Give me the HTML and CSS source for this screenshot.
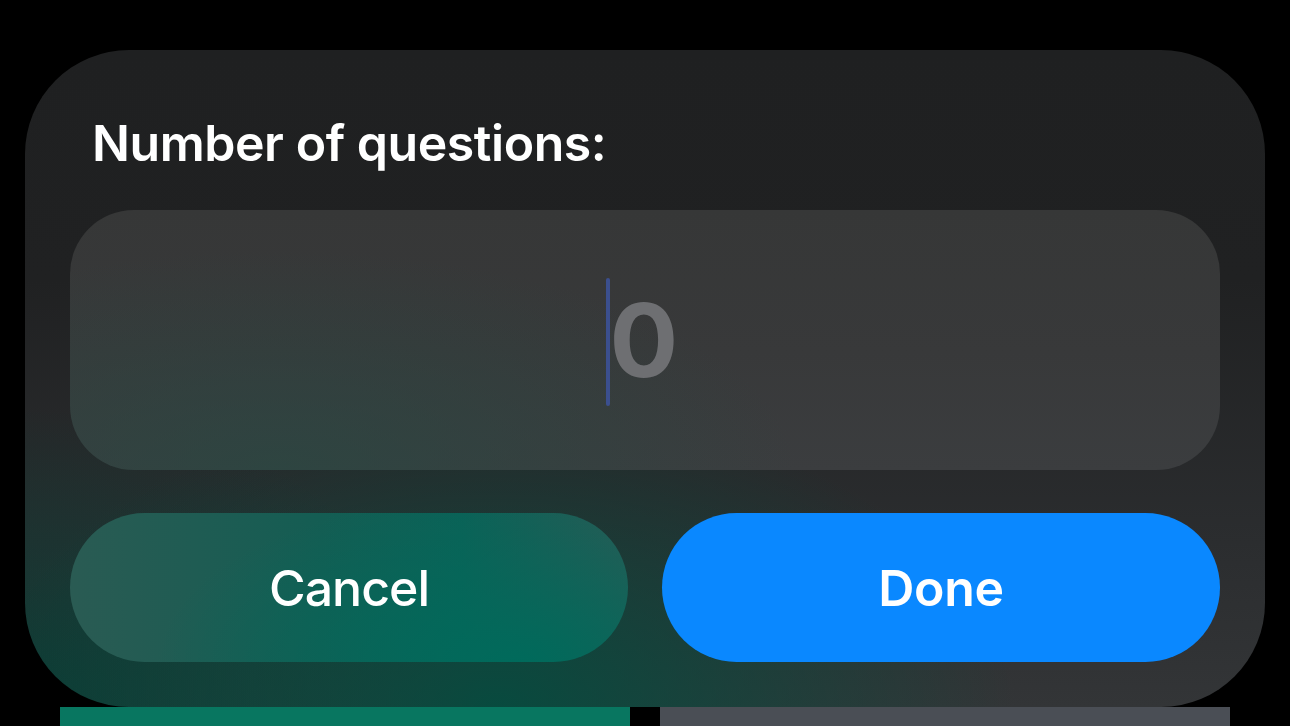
FILE: index.html
```html
<!DOCTYPE html>
<html lang="en">
<head>
  <meta charset="UTF-8">
  <meta name="viewport" content="width=device-width, initial-scale=1.0">
  <title>Number of questions</title>
  <link rel="stylesheet" href="styles.css">
</head>
<body>

  <!-- Prompt dialog -->
  <div class="dialog">
    <h1 class="dialog-title">Number of questions:</h1>

    <div class="number-field">
      <span class="value"><span class="caret"></span>0</span>
    </div>

    <div class="actions">
      <button class="btn btn-cancel">Cancel</button>
      <button class="btn btn-done">Done</button>
    </div>
  </div>

  <!-- Content peeking out behind the dialog -->
  <div class="behind">
    <div class="tile tile-green"></div>
    <div class="tile tile-grey"></div>
  </div>

</body>
</html>
```

FILE: styles.css
```css
/* Global Styles */
body {
  margin: 0;
  padding: 0;
  background-color: #000;
  font-family: 'Inter', 'Roboto', sans-serif;
  color: #fff;
  overflow: hidden;
}

/* Dialog */
.dialog {
  box-sizing: border-box;
  width: 1240px;
  height: 657px;
  margin: 50px 0 0 25px;
  padding: 63px 45px 45px;
  border-radius: 104px;
  background:
    radial-gradient(ellipse 520px 300px at 38% 100%, rgba(0, 78, 64, 0.85), rgba(0, 78, 64, 0) 100%),
    radial-gradient(ellipse 420px 300px at 0% 100%, rgba(2, 62, 52, 0.8), rgba(2, 62, 52, 0) 100%),
    linear-gradient(180deg, #1f2021 0%, #202122 35%, #2b2d2f 75%, #333537 100%);
  display: flex;
  flex-direction: column;
}
.dialog-title {
  margin: 0;
  font-size: 50px;
  line-height: 60px;
  font-weight: 600;
  letter-spacing: -0.45px;
  padding-left: 22px;
}

/* Input */
.number-field {
  margin-top: 37px;
  height: 260px;
  border-radius: 64px;
  background:
    radial-gradient(ellipse 520px 220px at 18% 100%, rgba(40, 72, 66, 0.7), rgba(40, 72, 66, 0) 100%),
    linear-gradient(180deg, #363737 0%, #38393a 55%, #3b3d3f 100%);
  display: flex;
  align-items: center;
  justify-content: center;
}
.value {
  position: relative;
  font-size: 102px;
  font-weight: 700;
  color: #6e6f72;
  line-height: 1;
  margin-left: -2px;
}
.caret {
  position: absolute;
  left: -4px;
  top: -11px;
  width: 4px;
  height: 128px;
  border-radius: 2px;
  background-color: #3b4f8e;
}

/* Buttons */
.actions {
  margin-top: 43px;
  display: grid;
  grid-template-columns: 1fr 1fr;
  gap: 34px;
}
.btn {
  height: 149px;
  border: none;
  border-radius: 75px;
  font-family: inherit;
  font-size: 50px;
  color: #fff;
}
.btn-cancel {
  font-weight: 500;
  letter-spacing: -1px;
  background:
    radial-gradient(ellipse 360px 170px at 80% 100%, #006a5b, rgba(0, 106, 91, 0) 100%),
    linear-gradient(90deg, #2a5b53 0%, #145d53 45%, #0b6257 70%, #2a5a55 100%);
}
.btn-done {
  font-weight: 600;
  letter-spacing: -0.3px;
  background-color: #0a88ff;
}

/* Behind */
.behind {
  display: flex;
  gap: 30px;
  margin-left: 60px;
}
.tile {
  width: 570px;
  height: 40px;
}
.tile-green {
  background-color: #087660;
}
.tile-grey {
  background-color: #4a4e55;
}
```
